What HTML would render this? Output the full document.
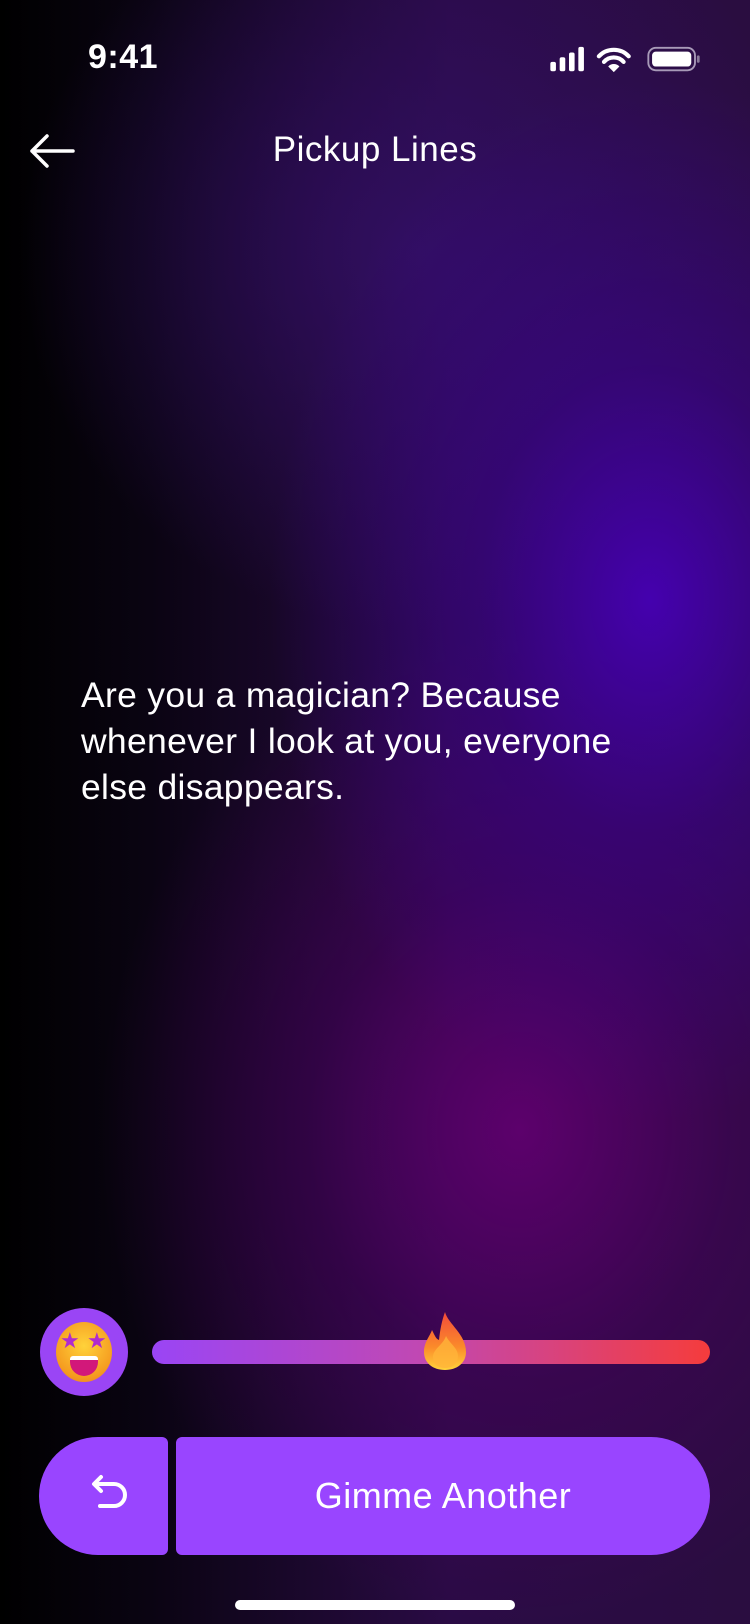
<!DOCTYPE html>
<html><head><meta charset="utf-8"><style>
*{margin:0;padding:0;box-sizing:border-box}
body{width:750px;height:1624px;overflow:hidden;font-family:"Liberation Sans",sans-serif;color:#fff;position:relative;
background:
radial-gradient(ellipse 380px 520px at 650px 600px,rgba(70,0,180,0.95),rgba(60,0,150,0.5) 45%,rgba(0,0,0,0) 100%),
radial-gradient(ellipse 420px 500px at 520px 1130px,rgba(95,0,110,0.95),rgba(70,0,90,0.5) 50%,rgba(0,0,0,0) 100%),
radial-gradient(ellipse 400px 380px at 420px 250px,rgba(50,15,100,0.9),rgba(0,0,0,0) 100%),
linear-gradient(90deg,#000 0%,#0a0412 20%,#2a0b45 60%,#2a0d40 100%);}
.abs{position:absolute}
</style></head><body>
<div class="abs" style="left:88px;top:38px;font-size:34px;font-weight:bold;letter-spacing:0.5px">9:41</div>
<svg class="abs" style="left:545px;top:46px" width="160" height="28" viewBox="0 0 160 30">
<rect x="0" y="17" width="6" height="10" rx="2" fill="#fff"/>
<rect x="10" y="12" width="6" height="15" rx="2" fill="#fff"/>
<rect x="20" y="7" width="6" height="20" rx="2" fill="#fff"/>
<rect x="30" y="1" width="6" height="26" rx="2" fill="#fff"/>
<path d="M52 11a22 22 0 0 1 32 0" stroke="#fff" stroke-width="4.5" fill="none" stroke-linecap="round"/>
<path d="M57.5 17a14 14 0 0 1 21 0" stroke="#fff" stroke-width="4.5" fill="none" stroke-linecap="round"/>
<path d="M62 22l6 6 6-6a8 8 0 0 0-12 0z" fill="#fff"/>
<rect x="105" y="2" width="50" height="24" rx="8" fill="none" stroke="#a89ab8" stroke-width="2"/>
<rect x="109" y="6" width="42" height="16" rx="4" fill="#fff"/>
<rect x="157" y="10" width="3" height="8" rx="1.5" fill="#8a7a9a"/>
</svg>
<svg class="abs" style="left:28px;top:132px" width="48" height="38" viewBox="0 0 48 38">
<path d="M45 19H4M19 4L4 19l15 15" stroke="#fff" stroke-width="3.5" fill="none" stroke-linecap="round" stroke-linejoin="round"/>
</svg>
<div class="abs" style="left:0;width:750px;top:130px;text-align:center;font-size:35px;letter-spacing:0.5px">Pickup Lines</div>
<div class="abs" style="left:81px;top:672px;width:590px;font-size:35.5px;line-height:46px;letter-spacing:0.3px">Are you a magician? Because whenever I look at you, everyone else disappears.</div>
<div class="abs" style="left:40px;top:1308px;width:88px;height:88px;border-radius:50%;background:#9a45f5"></div>
<div class="abs" style="left:56px;top:1322px;width:56px;height:60px;border-radius:50%;background:radial-gradient(circle at 50% 40%,#ffd23a,#f59a1f 70%,#e8702a)"></div>
<div class="abs" style="left:60px;top:1328px;font-size:22px;color:#b02ad0">★</div>
<div class="abs" style="left:87px;top:1328px;font-size:22px;color:#b02ad0">★</div>
<div class="abs" style="left:70px;top:1356px;width:28px;height:20px;border-radius:3px 3px 14px 14px;background:#d2187a;border-top:4px solid #fff"></div>
<div class="abs" style="left:152px;top:1340px;width:558px;height:24px;border-radius:12px;background:linear-gradient(90deg,#9a45f5,#c248b0 50%,#f53c3c)"></div>
<svg class="abs" style="left:418px;top:1310px" width="54" height="62" viewBox="0 0 54 62">
<defs><linearGradient id="f" x1="0" y1="0" x2="0" y2="1"><stop offset="0" stop-color="#f24a3a"/><stop offset="0.6" stop-color="#fb8a2a"/><stop offset="1" stop-color="#ffd23a"/></linearGradient></defs>
<path d="M27 2C30 14 48 24 48 42c0 11-9 18-21 18S6 53 6 42c0-10 6-16 8-22 3 6 4 9 7 10C22 20 24 10 27 2z" fill="url(#f)"/>
<path d="M28 26c4 8 12 12 12 20 0 7-5 12-13 12s-12-5-12-11c0-8 10-12 13-21z" fill="#ffb43a" opacity="0.8"/>
</svg>
<div class="abs" style="left:39px;top:1437px;width:129px;height:118px;background:#9945ff;border-radius:59px 6px 6px 59px"></div>
<svg class="abs" style="left:88px;top:1474px" width="44" height="44" viewBox="0 0 44 44">
<path d="M7 10h19a11 11 0 0 1 0 22H12M13 3L6 10l7 7" stroke="#fff" stroke-width="4" fill="none" stroke-linecap="round" stroke-linejoin="round"/>
</svg>
<div class="abs" style="left:176px;top:1437px;width:534px;height:118px;background:#9945ff;border-radius:6px 59px 59px 6px;text-align:center;line-height:118px;font-size:36px;letter-spacing:0.5px">Gimme Another</div>
<div class="abs" style="left:235px;top:1600px;width:280px;height:10px;border-radius:5px;background:#fff"></div>
</body></html>
